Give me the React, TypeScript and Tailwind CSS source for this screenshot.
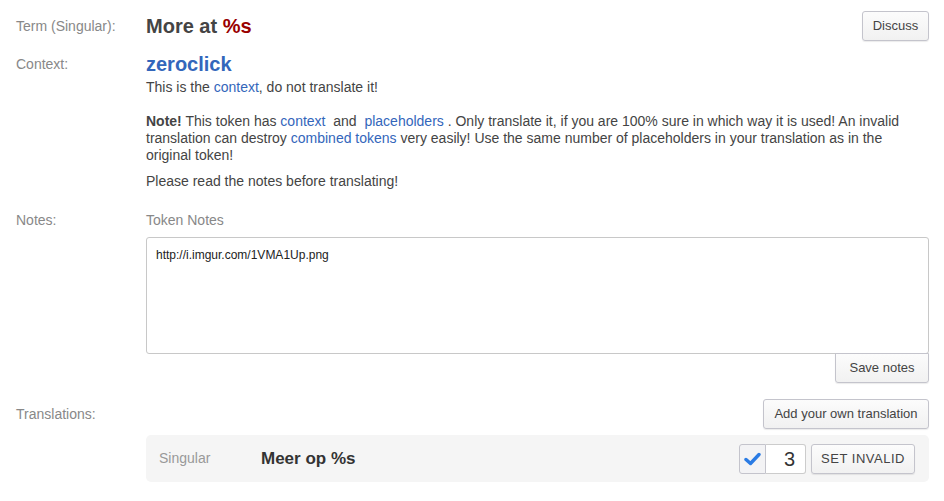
import React from "react";

const btn =
  "border border-[#c4c4cc] rounded-[3px] bg-gradient-to-b from-[#fcfcfc] to-[#f1f1f1] text-[#444] text-[13px] shadow-[0_1px_1px_rgba(0,0,0,0.08)]";

export default function App() {
  return (
    <div className="w-[944px] h-[501px] bg-white pl-4 pr-[15px] pt-[11px] font-['Liberation_Sans',Arial,sans-serif] text-[14px] text-[#444] overflow-hidden">
      {/* Term */}
      <div className="flex items-center h-[30px]">
        <div className="w-[130px] text-[#888]">Term (Singular):</div>
        <div className="flex-1 text-[20px] font-bold leading-[24px] text-[#444]">
          More at <span className="text-[#990000]">%s</span>
        </div>
        <button className={`${btn} w-[67px] h-[30px]`}>Discuss</button>
      </div>

      {/* Context */}
      <div className="flex mt-[11px]">
        <div className="w-[130px] text-[#888] leading-[24px]">Context:</div>
        <div className="flex-1">
          <div className="text-[20px] font-bold leading-[24px] text-[#3366bb]">zeroclick</div>
          <p className="mt-[2px] leading-[18px]">
            This is the <span className="text-[#3366bb]">context</span>, do not translate it!
          </p>
          <p className="mt-[17px] leading-[17px]">
            <b>Note!</b> This token has <span className="text-[#3366bb]">context</span>&nbsp; and&nbsp;{" "}
            <span className="text-[#3366bb]">placeholders</span> . Only translate it, if you are 100% sure in which
            way it is used! An invalid translation can destroy{" "}
            <span className="text-[#3366bb]">combined tokens</span> very easily! Use the same number of placeholders
            in your translation as in the original token!
          </p>
          <p className="mt-[9px] leading-[17px]">Please read the notes before translating!</p>
        </div>
      </div>

      {/* Notes */}
      <div className="flex mt-[22px]">
        <div className="w-[130px] text-[#888] leading-[17px]">Notes:</div>
        <div className="flex-1">
          <div className="text-[#888] leading-[17px]">Token Notes</div>
          <div className="mt-[8px] h-[117px] border border-[#c8c8c8] rounded-[3px] px-[9px] py-[9px] text-[12px] leading-[16px] text-[#222]">
            http://i.imgur.com/1VMA1Up.png
          </div>
          <div className="flex justify-end">
            <button className={`${btn} w-[94px] h-[30px] -mt-px rounded-t-none`}>Save notes</button>
          </div>
        </div>
      </div>

      {/* Translations */}
      <div className="flex mt-[16px]">
        <div className="w-[130px] text-[#888] leading-[30px]">Translations:</div>
        <div className="flex-1">
          <div className="flex justify-end">
            <button className={`${btn} w-[166px] h-[30px]`}>Add your own translation</button>
          </div>
          <div className="mt-[6px] h-[47px] bg-[#f5f5f5] rounded-[5px] flex items-center pl-[13px] pr-[14px]">
            <div className="w-[102px] text-[#999]">Singular</div>
            <div className="flex-1 text-[17px] font-bold text-[#333]">Meer op %s</div>
            <div className="flex items-center">
              <div className="w-[27px] h-[30px] border border-[#c4c4cc] rounded-l-[3px] bg-[#f3f3f5] flex items-center justify-center">
                <svg width="17" height="14" viewBox="0 0 17 14">
                  <path d="M2 7.5 L6.5 11.5 L15 2.5" fill="none" stroke="#2a7be4" strokeWidth="3.4" strokeLinecap="round" strokeLinejoin="round" />
                </svg>
              </div>
              <div className="w-[40px] h-[30px] border border-l-0 border-[#ccc] rounded-r-[3px] bg-white flex items-center justify-end pr-[10px] text-[20px] text-[#333]">
                3
              </div>
              <button className={`${btn} ml-[5px] w-[104px] h-[30px] tracking-[0.5px]`}>SET INVALID</button>
            </div>
          </div>
        </div>
      </div>
    </div>
  );
}
